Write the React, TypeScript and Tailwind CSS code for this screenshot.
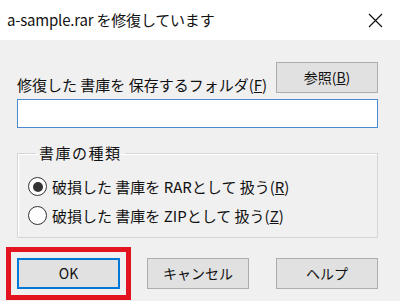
import React from "react";

function WinButton({ children, focused = false }: { children: React.ReactNode; focused?: boolean }) {
  return (
    <button
      className={
        focused
          ? "w-[103px] h-[31px] bg-[#e1e1e1] border-2 border-[#0078d7] text-[14px] text-[#111] flex items-center justify-center"
          : "w-[102px] h-[31px] bg-[#e1e1e1] border border-[#adadad] text-[14px] text-[#111] flex items-center justify-center"
      }
    >
      {children}
    </button>
  );
}

function Radio({ checked, children }: { checked: boolean; children: React.ReactNode }) {
  return (
    <div className="flex items-center h-[29px]">
      <div className="w-[19px] h-[19px] rounded-full border-[1.5px] border-[#333] bg-white flex items-center justify-center">
        {checked && <div className="w-[10px] h-[10px] rounded-full bg-[#333]" />}
      </div>
      <span className="ml-[5px] text-[15px] text-[#111] leading-[20px]">{children}</span>
    </div>
  );
}

export default function App() {
  return (
    <div
      className="w-[400px] h-[301px] bg-[#f0f0f0] overflow-hidden"
      style={{ fontFamily: '"Noto Sans CJK JP", "Noto Sans", sans-serif' }}
    >
      <div className="h-[40px] bg-white flex items-center justify-between pl-[7px] pr-[17px]">
        <span className="text-[15px] text-[#111] tracking-[-0.2px]">a-sample.rar を修復しています</span>
        <svg width="15" height="15" viewBox="0 0 15 15" className="mt-[1px]">
          <path d="M1 1 L14 14 M14 1 L1 14" stroke="#111" strokeWidth="1.2" fill="none" />
        </svg>
      </div>
      <div className="pl-[17px] pr-[22px]">
        <div className="flex items-end justify-between mt-[22px]">
          <span className="text-[15px] text-[#111] leading-[20px] mb-[-2px]">
            修復した 書庫を 保存するフォルダ(<u>F</u>)
          </span>
          <WinButton>
            参照(<u>B</u>)
          </WinButton>
        </div>
        <div className="mt-[6px] h-[29px] bg-white border-[1.5px] border-[#4a8ad0]" />
        <fieldset className="mt-[15px] h-[95px] border border-[#d5d5d5] pl-[10px] shadow-[inset_1px_1px_0_#ffffff]">
          <legend className="ml-[8px] px-[3px] text-[15px] text-[#111] leading-[20px] tracking-[1.5px]">
            書庫の種類
          </legend>
          <div className="mt-[9px]">
            <Radio checked>
              破損した 書庫を RARとして 扱う(<u>R</u>)
            </Radio>
            <Radio checked={false}>
              破損した 書庫を ZIPとして 扱う(<u>Z</u>)
            </Radio>
          </div>
        </fieldset>
        <div className="flex justify-between mt-[20px]">
          <div className="relative">
            <WinButton focused>OK</WinButton>
            <div className="absolute -left-[11px] -top-[11px] -right-[11px] -bottom-[11px] border-[5px] border-[#e3141f] pointer-events-none" />
          </div>
          <WinButton>キャンセル</WinButton>
          <WinButton>ヘルプ</WinButton>
        </div>
      </div>
    </div>
  );
}
